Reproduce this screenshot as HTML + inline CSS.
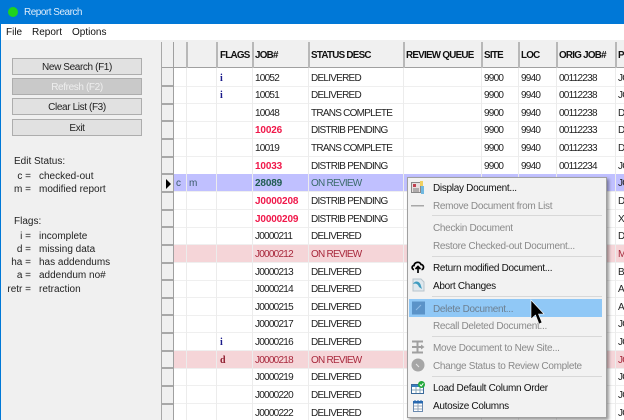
<!DOCTYPE html>
<html><head><meta charset="utf-8"><style>
html,body{margin:0;padding:0;width:624px;height:420px;overflow:hidden;background:#f0f0f0}
body{position:relative;font:10px/14px "Liberation Sans",sans-serif;color:#222}
div,span{position:absolute;white-space:nowrap}
.b{left:12px;width:128px;height:15px;border:1px solid #adadad;background:#e1e1e1;text-align:center;line-height:17px;color:#222;letter-spacing:-.38px}
.l{left:39px}.k{left:0;width:31px;text-align:right}
#grid{left:162px;top:42px;width:462px;height:378px;background:#fff;overflow:hidden}
.h{top:1px;height:26px;line-height:26px;font-weight:bold;font-size:9.8px;color:#111;letter-spacing:-.72px}
.r{left:0;width:462px;height:17px;line-height:19px;letter-spacing:-.75px;border-bottom:1px solid #efefef;font-size:10px}
.f{left:58px;font:bold 10px/19px "Liberation Serif",serif;color:#1a1a8a}.j{left:93px}.s{left:149px}.t{left:322px}.c{left:359px}.o{left:397px}.p{left:456px}
.red .j{color:#f0184a;font-weight:bold;letter-spacing:-.15px}
.pk{background:#f5d5d8}.pk span{color:#a8283c}
.bl{background:#c0c0ff}
.v{top:26px;width:1px;height:352px;background:#ececec}
.hv{top:0;width:2px;height:26px;background:#b8b8b8}
.rh{left:0;width:11px;height:2px;background:#a8a8a8}
#menu{left:407px;top:177px;width:198px;height:239px;background:#f2f2f2;border:1px solid #a0a0a0;box-shadow:2px 2px 3px rgba(0,0,0,.4)}
#menu span{left:25px;line-height:14px;margin-top:1px;color:#111;font-size:10px;letter-spacing:-.3px}
#menu span.g{color:#8a8a8a}
.sep{left:24px;width:170px;height:1px;background:#d8d8d8}
svg{position:absolute;overflow:visible}
</style></head><body>
<div style="left:0;top:0;width:624px;height:24px;background:#0078d7"></div>
<div style="left:0;top:24px;width:1px;height:396px;background:#0078d7"></div>
<div style="left:8px;top:7px;width:10px;height:10px;border-radius:5px;background:#1fd31f"></div>
<div style="left:24px;top:6px;color:#dcebfa;font-size:10px;letter-spacing:-.5px">Report Search</div>
<div style="left:1px;top:24px;width:623px;height:16px;background:#fff"></div>
<div style="left:6px;top:26px;color:#111">File</div>
<div style="left:32px;top:26px;color:#111">Report</div>
<div style="left:72px;top:26px;color:#111">Options</div>

<div class="b" style="top:58px">New Search (F1)</div>
<div class="b" style="top:78px;background:#c9c9c9;color:#eee">Refresh (F2)</div>
<div class="b" style="top:98px">Clear List (F3)</div>
<div class="b" style="top:119px">Exit</div>

<div style="left:14px;top:155px">Edit Status:</div>
<div class="k" style="top:170px">c =</div><div class="l" style="top:170px">checked-out</div>
<div class="k" style="top:183px">m =</div><div class="l" style="top:183px">modified report</div>
<div style="left:14px;top:215px">Flags:</div>
<div class="k" style="top:230px">i =</div><div class="l" style="top:230px">incomplete</div>
<div class="k" style="top:243px">d =</div><div class="l" style="top:243px">missing data</div>
<div class="k" style="top:256px">ha =</div><div class="l" style="top:256px">has addendums</div>
<div class="k" style="top:269px">a =</div><div class="l" style="top:269px">addendum no#</div>
<div class="k" style="top:283px">retr =</div><div class="l" style="top:283px">retraction</div>

<div style="left:161px;top:42px;width:1px;height:378px;background:#a8a8a8"></div>
<div id="grid">
<div style="left:0;top:0;width:462px;height:26px;background:#f0f0f0;border-bottom:1px solid #a0a0a0;box-sizing:border-box"></div>
<span class="h" style="left:58px">FLAGS</span><span class="h" style="left:93px">JOB#</span><span class="h" style="left:149px">STATUS DESC</span><span class="h" style="left:244px">REVIEW QUEUE</span><span class="h" style="left:322px">SITE</span><span class="h" style="left:359px">LOC</span><span class="h" style="left:397px">ORIG JOB#</span><span class="h" style="left:456px">P</span>

<div class="r" style="top:27px"><span class="f">i</span><span class="j">10052</span><span class="s">DELIVERED</span><span class="t">9900</span><span class="c">9940</span><span class="o">00112238</span><span class="p">JO</span></div>
<div class="r" style="top:44px"><span class="f">i</span><span class="j">10051</span><span class="s">DELIVERED</span><span class="t">9900</span><span class="c">9940</span><span class="o">00112238</span><span class="p">JO</span></div>
<div class="r" style="top:62px"><span class="j">10048</span><span class="s">TRANS COMPLETE</span><span class="t">9900</span><span class="c">9940</span><span class="o">00112238</span><span class="p">DO</span></div>
<div class="r red" style="top:79px"><span class="j">10026</span><span class="s">DISTRIB PENDING</span><span class="t">9900</span><span class="c">9940</span><span class="o">00112233</span><span class="p">DO</span></div>
<div class="r" style="top:97px"><span class="j">10019</span><span class="s">TRANS COMPLETE</span><span class="t">9900</span><span class="c">9940</span><span class="o">00112233</span><span class="p">DO</span></div>
<div class="r red" style="top:115px"><span class="j">10033</span><span class="s">DISTRIB PENDING</span><span class="t">9900</span><span class="c">9940</span><span class="o">00112234</span><span class="p">JO</span></div>
<div class="r bl" style="top:132px"><span style="left:14px;color:#3a5a6a;letter-spacing:0">c</span><span style="left:27px;color:#3a5a6a;letter-spacing:0">m</span><span class="j" style="color:#1f5b4f;font-weight:bold;letter-spacing:-.15px">28089</span><span class="s" style="color:#3a6a6a">ON REVIEW</span><span class="p">JO</span></div>
<div class="r red" style="top:150px"><span class="j">J0000208</span><span class="s">DISTRIB PENDING</span><span class="p">DO</span></div>
<div class="r red" style="top:168px"><span class="j">J0000209</span><span class="s">DISTRIB PENDING</span><span class="p">XO</span></div>
<div class="r" style="top:185px"><span class="j">J0000211</span><span class="s">DELIVERED</span><span class="p">DO</span></div>
<div class="r pk" style="top:203px"><span class="j">J0000212</span><span class="s">ON REVIEW</span><span class="p">MO</span></div>
<div class="r" style="top:221px"><span class="j">J0000213</span><span class="s">DELIVERED</span><span class="p">BO</span></div>
<div class="r" style="top:238px"><span class="j">J0000214</span><span class="s">DELIVERED</span><span class="p">AO</span></div>
<div class="r" style="top:256px"><span class="j">J0000215</span><span class="s">DELIVERED</span><span class="p">AO</span></div>
<div class="r" style="top:273px"><span class="j">J0000217</span><span class="s">DELIVERED</span><span class="p">JO</span></div>
<div class="r" style="top:291px"><span class="f">i</span><span class="j">J0000216</span><span class="s">DELIVERED</span><span class="p">JO</span></div>
<div class="r pk" style="top:309px"><span class="f" style="color:#8e1c2e">d</span><span class="j">J0000218</span><span class="s">ON REVIEW</span><span class="p">JO</span></div>
<div class="r" style="top:326px"><span class="j">J0000219</span><span class="s">DELIVERED</span><span class="p">JO</span></div>
<div class="r" style="top:344px"><span class="j">J0000220</span><span class="s">DELIVERED</span><span class="p">JO</span></div>
<div class="r" style="top:362px"><span class="j">J0000222</span><span class="s">DELIVERED</span><span class="p">JO</span></div>

<div style="left:0;top:26px;width:11px;height:352px;background:#f0f0f0"></div>
<div class="rh" style="top:43px"></div><div class="rh" style="top:61px"></div><div class="rh" style="top:78px"></div><div class="rh" style="top:96px"></div><div class="rh" style="top:114px"></div><div class="rh" style="top:131px"></div><div class="rh" style="top:149px"></div><div class="rh" style="top:167px"></div><div class="rh" style="top:184px"></div><div class="rh" style="top:202px"></div><div class="rh" style="top:220px"></div><div class="rh" style="top:237px"></div><div class="rh" style="top:255px"></div><div class="rh" style="top:272px"></div><div class="rh" style="top:290px"></div><div class="rh" style="top:308px"></div><div class="rh" style="top:325px"></div><div class="rh" style="top:343px"></div><div class="rh" style="top:361px"></div>

<div class="v" style="left:24px"></div><div class="v" style="left:54px"></div><div class="v" style="left:90px"></div><div class="v" style="left:146px"></div><div class="v" style="left:241px"></div><div class="v" style="left:319px"></div><div class="v" style="left:356px"></div><div class="v" style="left:394px"></div><div class="v" style="left:453px"></div>
<div class="hv" style="left:11px;height:378px;width:1px;background:#a0a0a0"></div>
<div class="hv" style="left:24px"></div><div class="hv" style="left:54px"></div><div class="hv" style="left:90px"></div><div class="hv" style="left:146px"></div><div class="hv" style="left:241px"></div><div class="hv" style="left:319px"></div><div class="hv" style="left:356px"></div><div class="hv" style="left:394px"></div><div class="hv" style="left:453px"></div>
</div>
<svg style="left:165px;top:179px" width="7" height="10"><path d="M1 0L6 5L1 10Z" fill="#000"/></svg>

<div id="menu">
<span style="top:3px">Display Document...</span>
<span class="g" style="top:21px">Remove Document from List</span>
<div class="sep" style="top:37px"></div>
<span class="g" style="top:43px">Checkin Document</span>
<span class="g" style="top:61px">Restore Checked-out Document...</span>
<div class="sep" style="top:78px"></div>
<span style="top:83px">Return modified Document...</span>
<span style="top:101px">Abort Changes</span>
<div class="sep" style="top:118px"></div>
<div style="left:1px;top:121px;width:193px;height:18px;background:#90c8f6"></div>
<span class="g" style="top:124px;color:#6d7f90">Delete Document...</span>
<span class="g" style="top:141px">Recall Deleted Document...</span>
<div class="sep" style="top:158px"></div>
<span class="g" style="top:163px">Move Document to New Site...</span>
<span class="g" style="top:181px">Change Status to Review Complete</span>
<div class="sep" style="top:198px"></div>
<span style="top:203px">Load Default Column Order</span>
<span style="top:221px">Autosize Columns</span>
</div>

<svg style="left:411px;top:181px" width="14" height="13"><rect x="0.5" y="1.5" width="9" height="10" fill="#e8e0e0" stroke="#888"/><rect x="2" y="3" width="3" height="3" fill="#c04050"/><path d="M2 8h6M2 10h6" stroke="#777"/><rect x="9" y="0" width="3" height="5" fill="#f0d060"/><rect x="10" y="5" width="3" height="8" fill="#70b8e0"/></svg>
<svg style="left:411px;top:205px" width="14" height="2"><rect width="13" height="1.5" fill="#a8a8a8"/></svg>
<svg style="left:411px;top:260px" width="14" height="14"><path d="M3 9.500C.5 9.500.5 5.500 3 5.500C3.500 2 8.500 1 10 4.500C13 4.500 13.500 9.500 10.500 9.500" fill="none" stroke="#000" stroke-width="1.700"/><path d="M7 13V6.500M4.500 9L7 6.500L9.500 9" fill="none" stroke="#000" stroke-width="1.700"/></svg>
<svg style="left:411px;top:278px" width="14" height="14"><path d="M2 1h8l3 3v9H2z" fill="#dfe8ee" stroke="#b8c4cc"/><path d="M2 6C4 2 9 3 10 8L11 11L8 9C7 6 5 5 2 6Z" fill="#3f9cc0"/></svg>
<svg style="left:412px;top:301px" width="13" height="14"><rect width="13" height="13" y="0.500" fill="#5b93c8"/><path d="M4 9L9 4" stroke="#90bce4"/></svg>
<svg style="left:411px;top:340px" width="14" height="14"><path d="M1 1.500H12M1 12.500H12M6.500 1.500V12.500M1 7H12" stroke="#a0a0a0" stroke-width="2" fill="none"/><path d="M10 4.500L13.500 7L10 9.500Z" fill="#a0a0a0"/></svg>
<svg style="left:411px;top:358px" width="14" height="14"><circle cx="7" cy="7" r="6.500" fill="#a6a6a6"/><path d="M5 6L8 9" stroke="#e8e8e8"/></svg>
<svg style="left:411px;top:381px" width="15" height="14"><rect x="0.500" y="3.500" width="12" height="9" fill="#fff" stroke="#3a6a9a"/><rect x="1" y="4" width="11" height="2" fill="#3a80c0"/><path d="M1 9H12M5 6V12M9 6V12" stroke="#8ab"/><circle cx="10.500" cy="3.500" r="3.500" fill="#22a83a"/><path d="M8.800 3.500L10.200 5L12.300 2.300" stroke="#fff" fill="none"/></svg>
<svg style="left:412px;top:399px" width="13" height="14"><rect x="1.500" y="2.500" width="9" height="10" fill="#fff" stroke="#6a8ab0"/><rect x="1" y="2" width="10" height="2.500" fill="#2a6ab0"/><path d="M3 1V3M6 1V3M9 1V3" stroke="#2a6ab0"/><path d="M2 7H10M2 10H10M6 4.500V12" stroke="#9ab"/></svg>

<svg style="left:530px;top:300px" width="16" height="26"><path d="M1 0V19L5.500 15L9 24L12 22.500L8.500 14H14Z" fill="#000" stroke="#fff" stroke-width=".6"/></svg>
</body></html>
